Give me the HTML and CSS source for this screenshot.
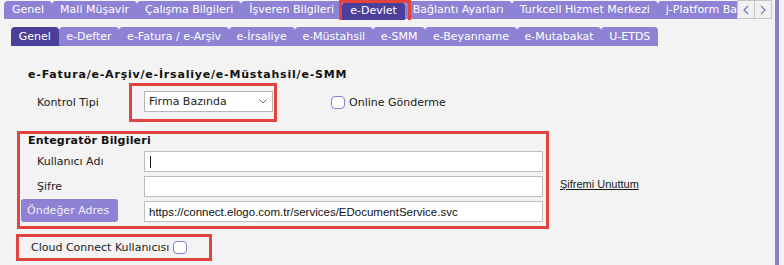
FILE: index.html
```html
<!DOCTYPE html>
<html lang="tr">
<head>
<meta charset="utf-8">
<title>e-Devlet</title>
<link rel="stylesheet" href="styles.css">
</head>
<body>
<div class="frame">
  <div class="main">
    <div class="tabbar">
      <div class="tabs tabs-top">
        <span class="tab">Genel</span>
        <span class="tab">Mali Müşavir</span>
        <span class="tab">Çalışma Bilgileri</span>
        <span class="tab">İşveren Bilgileri</span>
        <span class="tab active marked">e-Devlet</span>
        <span class="tab">Bağlantı Ayarları</span>
        <span class="tab">Turkcell Hizmet Merkezi</span>
        <span class="tab">j-Platform Bağlantısı</span>
      </div>
      <div class="scroll">
        <span class="sbtn"><svg width="6" height="10" viewBox="0 0 6 10"><polyline points="5,1 1,5 5,9" fill="none" stroke="#7b6fc8" stroke-width="1.2"/></svg></span>
        <span class="sbtn"><svg width="6" height="10" viewBox="0 0 6 10"><polyline points="1,1 5,5 1,9" fill="none" stroke="#7b6fc8" stroke-width="1.2"/></svg></span>
      </div>
    </div>
    <div class="tabs tabs-sub">
      <span class="tab active">Genel</span>
      <span class="tab">e-Defter</span>
      <span class="tab">e-Fatura / e-Arşiv</span>
      <span class="tab">e-İrsaliye</span>
      <span class="tab">e-Müstahsil</span>
      <span class="tab">e-SMM</span>
      <span class="tab">e-Beyanname</span>
      <span class="tab">e-Mutabakat</span>
      <span class="tab">U-ETDS</span>
    </div>

    <div class="heading heading-main">e-Fatura/e-Arşiv/e-İrsaliye/e-Müstahsil/e-SMM</div>
    <div class="kontrol">
      <span class="label label-kontrol">Kontrol Tipi</span>
      <div class="mark mark-select">
        <div class="select">
          <span>Firma Bazında</span>
          <svg width="8" height="5" viewBox="0 0 8 5"><polyline points="0.5,0.5 4,4 7.5,0.5" fill="none" stroke="#666" stroke-width="1"/></svg>
        </div>
      </div>
      <div class="check"><span class="box"></span><span>Online Gönderme</span></div>
    </div>

    <div class="entegrator">
      <div class="mark mark-entegrator">
        <div class="heading heading-sub">Entegratör Bilgileri</div>
        <div class="field">
          <span class="label field-label">Kullanıcı Adı</span>
          <div class="input"><span class="caret"></span></div>
        </div>
        <div class="field">
          <span class="label field-label">Şifre</span>
          <div class="input"></div>
        </div>
        <div class="field field-btn">
          <span class="btn">Öndeğer Adres</span>
          <div class="input">https://connect.elogo.com.tr/services/EDocumentService.svc</div>
        </div>
      </div>
      <a class="forgot">Şifremi Unuttum</a>
    </div>

    <div class="mark mark-cloud">
      <span class="label">Cloud Connect Kullanıcısı</span>
      <span class="box"></span>
    </div>
  </div>
  <div class="rail"></div>
</div>
</body>
</html>
```

FILE: styles.css
```css
* { box-sizing: border-box; }
html, body { margin: 0; padding: 0; }
body {
  background: #f3f3f3;
  font-family: "DejaVu Sans", Verdana, sans-serif;
  font-size: 11px;
  color: #1e1e1e;
  width: 784px;
  height: 265px;
  overflow: hidden;
}
.frame { display: flex; height: 265px; }
.main { width: 775px; flex: none; }
.rail { width: 4px; background: #8b7fd2; flex: none; }

/* tabs */
.tabbar { display: flex; height: 20px; }
.tabs { display: flex; white-space: nowrap; align-items: flex-start; }
.tabs-top { width: 733px; margin-left: 4px; overflow: hidden; height: 20px; }
.tab {
  flex: none;
  background: #8e82d4;
  color: #fff;
  padding: 0 8px;
  height: 18px;
  line-height: 18px;
  margin-top: 1px;
  border-radius: 4px 4px 0 0;
}
.tab.active { background: #4b3f9c; }
.tabs-top .tab.active { margin-top: 2px; }
.marked { position: relative; }
.marked::after {
  content: "";
  position: absolute;
  left: -3px; top: -2px; right: -6px; bottom: -8px;
  border: 3px solid #e3433e;
}
.scroll { display: flex; }
.sbtn {
  width: 18px; height: 19px;
  border: 1px solid #c6c6c6;
  background: #f1f1f1;
  display: flex; align-items: center; justify-content: center;
}
.sbtn + .sbtn { margin-left: -1px; }

.tabs-sub { margin-left: 11px; margin-top: 7px; }
.tabs-sub .tab { height: 19px; line-height: 19px; margin-top: 0; padding: 0 7.75px; }

/* form */
.heading { font-weight: bold; line-height: 13px; color: #111; }
.heading-main { margin: 22px 0 0 28px; letter-spacing: 0.8px; }
.heading-sub { margin-left: 7px; letter-spacing: 0.2px; }
.label { color: #222; }
.mark { border: 3px solid #e3433e; }

.kontrol { display: flex; align-items: center; margin-top: 2px; }
.label-kontrol { width: 92px; margin-left: 37px; }
.mark-select { padding: 5px 1px 7px 12px; }
.select {
  width: 129px; height: 21px;
  background: #fff;
  border: 1px solid #b5b5b5;
  display: flex; align-items: center; justify-content: space-between;
  padding: 0 5px 0 4px;
  color: #222;
}
.check { display: flex; align-items: center; margin-left: 54px; color: #222; }
.box {
  flex: none;
  width: 14px; height: 13px;
  border: 1.5px solid #8a7dd0;
  border-radius: 4px;
  background: #fff;
}
.check .box { margin-right: 4px; }

.entegrator { display: flex; margin-top: 9px; }
.mark-entegrator { margin-left: 17px; width: 532px; padding: 0 3px 4px 1px; }
.field { display: flex; align-items: center; height: 21px; margin-top: 4px; }
.field-btn { height: 23px; margin-top: 2px; align-items: flex-end; }
.field-label { width: 123px; padding-left: 16px; flex: none; }
.btn {
  flex: none;
  width: 97px; height: 23px;
  margin-right: 26px;
  background: #8e82d4;
  color: #efedfb;
  border-radius: 3px;
  padding-left: 6px;
  line-height: 23px;
  white-space: nowrap;
}
.input {
  flex: none;
  width: 399px; height: 21px;
  background: #fff;
  border: 1px solid #bdbdbd;
  font-family: "Liberation Sans", Arial, sans-serif;
  font-size: 11.5px;
  color: #111;
  padding-left: 4px;
  display: flex; align-items: center;
  white-space: nowrap;
}
.caret { width: 1px; height: 12px; background: #111; margin-left: 1px; }
.forgot {
  margin: 47px 0 0 11px;
  font-family: "Liberation Sans", Arial, sans-serif;
  font-size: 11px;
  line-height: 13px;
  color: #1a1a1a;
  text-decoration: underline;
  height: 13px;
}

.mark-cloud {
  display: flex; align-items: center;
  margin: 5px 0 0 16px;
  width: 196px; height: 27px;
  padding-left: 12px;
}
.mark-cloud .box { margin-left: 4px; }
```
